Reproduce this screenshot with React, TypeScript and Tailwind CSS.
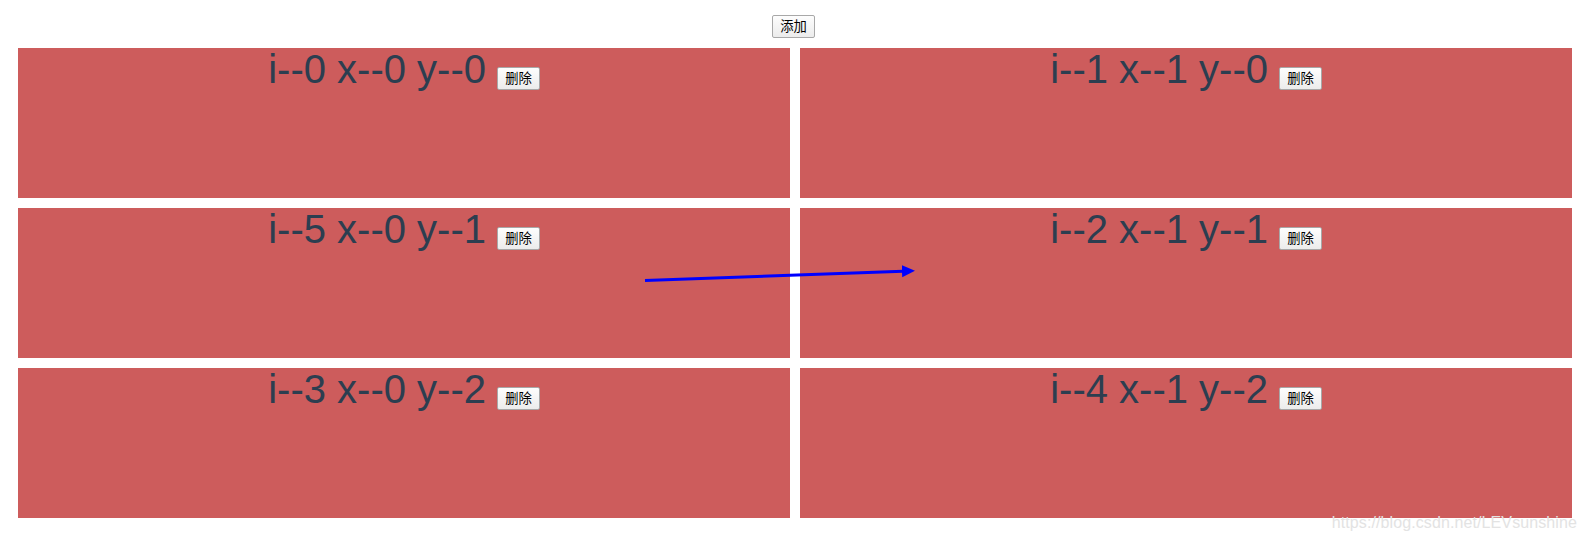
const items = [
  { i: 0, x: 0, y: 0 },
  { i: 1, x: 1, y: 0 },
  { i: 5, x: 0, y: 1 },
  { i: 2, x: 1, y: 1 },
  { i: 3, x: 0, y: 2 },
  { i: 4, x: 1, y: 2 },
];

const font = "font-['Liberation_Sans','Noto_Sans_CJK_SC',sans-serif]";

function SmallButton({ children }: { children: React.ReactNode }) {
  return (
    <button className="inline-block h-[23px] px-[7px] text-[13.33px] leading-[19px] text-black bg-gradient-to-b from-[#fdfdfd] to-[#ececec] border border-[#a8a8a8] rounded-[2px] align-baseline">
      {children}
    </button>
  );
}

export default function App() {
  return (
    <div className={`relative w-[1587px] h-[541px] bg-white overflow-hidden ${font}`}>
      <div className="flex justify-center pt-[15px] h-[48px]">
        <SmallButton>添加</SmallButton>
      </div>

      <div className="ml-[18px] w-[1554px] grid grid-cols-2 gap-[10px]">
        {items.map((item) => (
          <div key={item.i} className="h-[150px] bg-[#cd5c5c] text-center leading-[42px] text-[#2c3e50] text-[40px]">
            <span>i--{item.i} x--{item.x} y--{item.y} </span>
            <SmallButton>删除</SmallButton>
          </div>
        ))}
      </div>

      {/* drag arrow */}
      <svg className="absolute left-0 top-0 pointer-events-none" width="1587" height="541">
        <defs>
          <marker id="head" markerUnits="userSpaceOnUse" markerWidth="13" markerHeight="13" refX="1" refY="6.5" orient="auto">
            <path d="M0,0.5 L13,6.5 L0,12.5 Z" fill="#0000ff" />
          </marker>
        </defs>
        <line x1="645" y1="280.5" x2="903" y2="271.2" stroke="#0000ff" strokeWidth="3" markerEnd="url(#head)" />
      </svg>

      <div className="absolute right-[10px] top-[511px] text-[16px] text-[#e3e3e3] tracking-[0.1px]">
        https://blog.csdn.net/LEVsunshine
      </div>
    </div>
  );
}
